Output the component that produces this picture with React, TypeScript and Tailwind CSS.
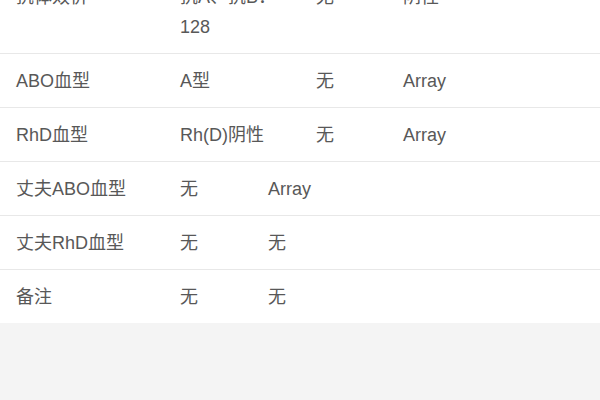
import React from "react"

type Row = {
  label: string
  cells: React.ReactNode[]
}

const fourCol: Row[] = [
  { label: "抗体效价", cells: [<>抗A、抗B：<br />128</>, "无", "阴性"] },
  { label: "ABO血型", cells: ["A型", "无", "Array"] },
  { label: "RhD血型", cells: ["Rh(D)阴性", "无", "Array"] },
]

const threeCol: Row[] = [
  { label: "丈夫ABO血型", cells: ["无", "Array"] },
  { label: "丈夫RhD血型", cells: ["无", "无"] },
  { label: "备注", cells: ["无", "无"] },
]

export default function App() {
  return (
    <div
      className="w-[600px] h-[400px] overflow-hidden bg-[#f4f4f4] text-[18px] leading-[30px] text-[#585858]"
      style={{ fontFamily: '"Liberation Sans", "Noto Sans CJK SC", sans-serif' }}
    >
      <div className="bg-white -mt-[30px]">
        {fourCol.map((row, i) => (
          <div
            key={row.label}
            className={
              i === 0
                ? "grid grid-cols-[164px_136px_87px_1fr] pl-4 pt-3 pb-[11px]"
                : "grid grid-cols-[164px_136px_87px_1fr] pl-4 pt-3 pb-[11px] border-t border-[#e8e8e8]"
            }
          >
            <div>{row.label}</div>
            {row.cells.map((c, j) => (
              <div key={j}>{c}</div>
            ))}
          </div>
        ))}
        {threeCol.map((row) => (
          <div
            key={row.label}
            className="grid grid-cols-[164px_88px_1fr] pl-4 pt-3 pb-[11px] border-t border-[#e8e8e8]"
          >
            <div>{row.label}</div>
            {row.cells.map((c, j) => (
              <div key={j}>{c}</div>
            ))}
          </div>
        ))}
      </div>
    </div>
  )
}
